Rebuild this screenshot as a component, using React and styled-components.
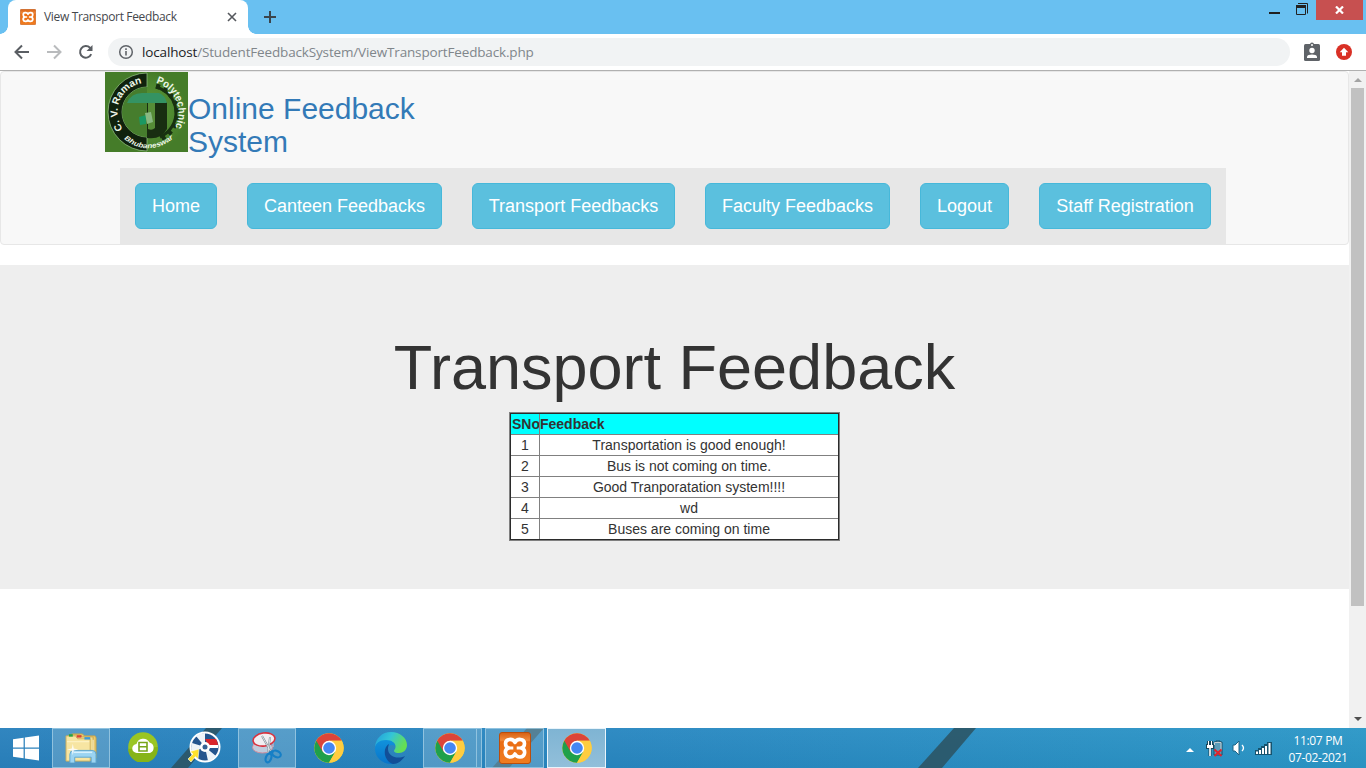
import React from "react";
import styled, { createGlobalStyle } from "styled-components";

const Global = createGlobalStyle`
  * { box-sizing: border-box; }
  html, body { margin: 0; padding: 0; overflow: hidden; background: #fff; }
  body { font-family: "Liberation Sans", Arial, sans-serif; font-size: 14px; color: #333; }
  svg { display: block; flex: none; }
`;

const uiFont = `"Open Sans", "Noto Sans", sans-serif`;

const Screen = styled.div`
  width: 1366px;
  height: 768px;
  display: flex;
  flex-direction: column;
  overflow: hidden;
`;

/* Browser frame */
const TitleBar = styled.header`
  height: 34px;
  flex: none;
  display: flex;
  background: #69c0f1;
`;
const Tab = styled.div`
  width: 256px;
  height: 34px;
  padding: 0 16px 0 20px;
  display: flex;
  align-items: center;
  background:
    radial-gradient(circle at 0 0, transparent 7.5px, #fff 8px) 0 100% / 8px 8px no-repeat,
    radial-gradient(circle at 100% 0, transparent 7.5px, #fff 8px) 100% 100% / 8px 8px no-repeat;
  isolation: isolate;
  position: relative;
  &::before {
    content: "";
    position: absolute;
    inset: 0 8px;
    border-radius: 8px 8px 0 0;
    background: #fff;
    z-index: -1;
  }
`;
const TabTitle = styled.span`
  flex: 1;
  margin-left: 8px;
  font: 12px/16px ${uiFont};
  letter-spacing: -0.34px;
  color: #45484d;
  white-space: nowrap;
`;
const NewTab = styled.div`
  padding: 11px 0 0 8px;
`;
const WindowControls = styled.div`
  margin-left: auto;
  display: flex;
  align-items: flex-start;
`;
const Control = styled.div`
  width: ${(p) => p.$w}px;
  height: ${(p) => p.$h || 20}px;
  display: flex;
  align-items: center;
  justify-content: center;
  background: ${(p) => p.$bg || "transparent"};
`;
const Toolbar = styled.div`
  height: 37px;
  flex: none;
  display: flex;
  align-items: center;
  padding: 0 14px;
  background: #fff;
  border-bottom: 1px solid #b0b0b0;
`;
const NavIcons = styled.div`
  display: flex;
  gap: 16px;
  width: 94px;
`;
const AddressBar = styled.div`
  width: 1182px;
  height: 28px;
  border-radius: 14px;
  background: #f1f3f4;
  display: flex;
  align-items: center;
  padding-left: 10px;
  gap: 8px;
`;
const Url = styled.span`
  font: 13.5px/20px ${uiFont};
  letter-spacing: -0.155px;
  color: #80868b;
  white-space: nowrap;
  b { font-weight: 400; color: #202124; }
`;
const Extensions = styled.div`
  display: flex;
  align-items: center;
  gap: 15px;
  margin-left: auto;
`;

/* Page */
const Viewport = styled.div`
  flex: 1;
  min-height: 0;
  display: flex;
`;
const Page = styled.main`
  flex: 1;
  min-width: 0;
  background: #fff;
`;
const Navbar = styled.nav`
  height: 174px;
  margin-bottom: 20px;
  border: 1px solid #e7e7e7;
  border-radius: 4px;
  background: #f8f8f8;
`;
const Brand = styled.div`
  height: 96px;
  display: flex;
  padding-left: 104px;
`;
const BrandTitle = styled.h2`
  width: 260px;
  margin: 20px 0 0;
  font-size: 30px;
  font-weight: 400;
  line-height: 33px;
  color: #337ab7;
`;
const Menu = styled.ul`
  list-style: none;
  width: 1106px;
  height: 76px;
  margin: 0 0 0 119px;
  padding: 15px;
  display: flex;
  justify-content: space-between;
  background: #e7e7e7;
`;
const MenuButton = styled.li`
  width: ${(p) => p.$w}px;
  height: 46px;
  border: 1px solid #46b8da;
  border-radius: 6px;
  background: #5bc0de;
  color: #fff;
  font-size: 18px;
  line-height: 44px;
  text-align: center;
  white-space: nowrap;
`;
const Jumbotron = styled.section`
  height: 324px;
  padding-top: 68px;
  background: #eee;
  display: flex;
  flex-direction: column;
  align-items: center;
`;
const Heading = styled.h1`
  margin: 0 0 10px;
  font-size: 63px;
  line-height: 69px;
  font-weight: 400;
  white-space: nowrap;
`;
const FeedbackTable = styled.div`
  width: 331px;
  border: 1px solid #808080;
  outline: 1px solid #2b2b2b;
  outline-offset: -2px;
  padding: 1px;
  background: #fff;
`;
const Row = styled.div`
  height: 21px;
  display: grid;
  grid-template-columns: 28px 1fr;
  line-height: 20px;
  text-align: ${(p) => (p.$head ? "left" : "center")};
  font-weight: ${(p) => (p.$head ? 700 : 400)};
  background: ${(p) => (p.$head ? "#0ff" : "#fff")};
  border-bottom: 1px solid #808080;
  &:last-child { height: 20px; border-bottom: 0; }
`;
const Cell = styled.span`
  height: 20px;
  white-space: nowrap;
  padding-left: ${(p) => (p.$lead ? 1 : 0)}px;
  & + & { border-left: 1px solid #808080; }
`;
const Scrollbar = styled.div`
  width: 17px;
  height: 657px;
  padding: 7px 2px 7px 2px;
  background: #f1f1f1;
  display: flex;
  flex-direction: column;
  align-items: center;
`;
const Thumb = styled.div`
  width: 13px;
  height: 518px;
  margin: 6px 0 auto;
  background: #c1c1c1;
`;

/* Taskbar */
const Taskbar = styled.footer`
  position: relative;
  height: 40px;
  flex: none;
  display: flex;
  background:
    linear-gradient(rgba(255, 255, 255, 0.04), rgba(0, 0, 0, 0.03)),
    linear-gradient(90deg, #2981bd, #2887c1 45%, #2b97c7);
`;
const Streak = styled.svg`
  position: absolute;
  inset: 0;
`;
const Slot = styled.div`
  position: relative;
  width: ${(p) => p.$w}px;
  margin-left: ${(p) => p.$ml || 0}px;
  height: 40px;
  padding-bottom: ${(p) => p.$lift || 0}px;
  display: flex;
  align-items: center;
  justify-content: center;
  background: ${(p) => (p.$state === "active" ? "linear-gradient(#7fb4d3, #92bfda)" : p.$state === "open" ? "rgba(150,192,216,.38)" : "transparent")};
  border: ${(p) => (p.$state === "active" ? "1px solid #e8f4fb" : p.$state === "open" ? "1px solid rgba(175,215,235,.65)" : "0")};
`;
const Stacked = styled.div`
  width: 5px;
  height: 40px;
  border: 1px solid rgba(175,215,235,.65);
  border-left: 0;
  background: rgba(150,192,216,.38);
`;
const Tray = styled.div`
  position: relative;
  margin-left: auto;
  display: flex;
  align-items: center;
  padding-right: 18px;
`;
const TrayIcons = styled.div`
  display: flex;
  align-items: center;
  gap: 9px;
  margin-right: 16px;
  svg:first-child { margin: 3px 3px 0 0; }
`;
const Clock = styled.div`
  width: 60px;
  padding-top: 1px;
  font: 12px/17px ${uiFont};
  letter-spacing: -0.35px;
  color: #fff;
  text-align: center;
  white-space: nowrap;
`;

const Xampp = ({ size }) => (
  <svg width={size} height={size} viewBox="0 0 32 32">
    <defs>
      <linearGradient id="xo" x2="0" y2="1"><stop offset="0" stopColor="#d65f12" /><stop offset=".25" stopColor="#f08a3c" /><stop offset=".3" stopColor="#ea6d14" /><stop offset="1" stopColor="#f07d20" /></linearGradient>
    </defs>
    <rect x=".5" y=".5" width="31" height="31" rx="2.5" fill="url(#xo)" stroke="#b94e0d" />
    <path d="M16 10.500C14 6 6.500 6.500 6.500 11.500 6.500 14 8 15.500 9.500 16 7 17 6 19 6.500 21.500 7.500 26 14 26 16 22 18 26 24.500 26 25.500 21.500 26 19 25 17 22.500 16 24 15.500 25.500 14 25.500 11.500 25.500 6.500 18 6 16 10.500Z" fill="none" stroke="#fff" strokeWidth="3.600" strokeLinejoin="round" />
    <path d="M9 16h5.300M17.700 16H23" stroke="#fff" strokeWidth="3.200" />
  </svg>
);

const Chrome = () => (
  <svg width="30" height="30" viewBox="0 0 48 48">
    <circle cx="24" cy="24" r="23.500" fill="#fc3" />
    <path d="M24 24 3.650 12.250A23.500 23.500 0 0 0 24 47.500L34.200 29.900Z" fill="#1fa04b" />
    <path d="M24 12.250H44.350A23.500 23.500 0 0 0 3.650 12.250L13.820 29.880Z" fill="#dc4438" />
    <path d="M24 12.250H44.350A23.500 23.500 0 0 1 24 47.500L34.180 29.880Z" fill="#ffcd40" />
    <circle cx="24" cy="24" r="11.500" fill="#fff" />
    <circle cx="24" cy="24" r="9.300" fill="#4587f3" />
  </svg>
);

const Edge = () => (
  <svg width="32" height="32" viewBox="0 0 32 32">
    <defs>
      <linearGradient id="ea" x2="1" y2=".4"><stop offset="0" stopColor="#1f9cdc" /><stop offset=".5" stopColor="#34c5d7" /><stop offset="1" stopColor="#65df54" /></linearGradient>
      <linearGradient id="eb" x2="0" y2="1"><stop offset="0" stopColor="#1192dc" /><stop offset="1" stopColor="#0874c9" /></linearGradient>
    </defs>
    <path d="M0 15C1 6 7 0 16 0c9 0 16 6 16 13 0 5-4 8-8 8-5 0-6-2-4-4 2-4-1-8-7-8C7 8 2 11 0 15Z" fill="url(#ea)" />
    <path d="M0 17C0 11 5 8 11 8c6 0 9 3 9 6-2-2-7-1-8 3-2 8 6 14 16 8-3 5-7 7-12 7C7 32 0 25 0 17Z" fill="url(#eb)" />
    <path d="M14 12c-7 4-5 17 4 20 6 0 10-5 12-8-8 4-17 0-17-7 0-2 .500-4 1-5Z" fill="#124f98" />
  </svg>
);

const Explorer = () => (
  <svg width="33" height="30" viewBox="0 0 34 31">
    <path d="M7 3V1h11l2 2h11l1 2v21H7Z" fill="#eacb70" stroke="#c9a54c" />
    <path d="M4 5V2h11l3 2h11v24H4Z" fill="#f3dd91" stroke="#c9a54c" />
    <path d="M1 7V3h10l2 3h13v23H1Z" fill="#f7e5a2" stroke="#d0b05c" />
    <path d="M4 2.500h4" stroke="#21a34a" strokeWidth="2.500" /><path d="M12 3.500h5" stroke="#db4235" strokeWidth="2.500" /><path d="M20 5.500h6" stroke="#3f99d6" strokeWidth="2.500" />
    <path d="M2 9h23M29 7v12" stroke="#fff5cb" />
    <path d="M5 31v-9q0-4 4-4h19q4 0 4 4v9h-5v-6H10v6Z" fill="#9bd4f2" stroke="#5fa6cd" />
    <path d="M9 20h19" stroke="#d8f1fd" strokeWidth="1.500" />
    <path d="M8 11l1 5 5 1-5 1-1 5-1-5-5-1 5-1Z" fill="#fff" opacity=".85" />
  </svg>
);

const CloudBadge = () => (
  <svg width="30" height="30" viewBox="0 0 30 30">
    <circle cx="15" cy="15" r="14.800" fill="#9ac524" /><path d="M0 17a15 15 0 0 0 30-2Z" fill="#86b418" />
    <path d="M9 21a4.500 4.500 0 0 1-.500-9 7 7 0 0 1 13-1.500A5.500 5.500 0 0 1 22 21Z" fill="#fff" />
    <path d="M11 10.500h8v8.500h-8ZM11 14.700h8" fill="none" stroke="#78a51a" strokeWidth="1.600" />
  </svg>
);

const Disc = () => (
  <svg width="33" height="34" viewBox="0 0 33 34">
    <circle cx="17" cy="16" r="15.500" fill="#fff" /><circle cx="17" cy="16" r="13.500" fill="#24558e" />
    <path d="M17 16 8 5a14 14 0 0 1 9-3ZM17 16 4 12a14 14 0 0 0 0 9ZM17 16l3 14a14 14 0 0 0 8-5Z" fill="#eef4f9" />
    <path d="M17 8h11a14 14 0 0 1 2 6H20Z" fill="#d8252b" /><path d="M20 14h10v3H19Z" fill="#fff" />
    <circle cx="17" cy="16" r="5" fill="#fff" /><circle cx="17" cy="16" r="2.500" fill="#356294" />
    <path d="m11 18-1 10-2.500-2.500L3 31l-3-3 5-5-3-2.500Z" fill="#ffe22c" stroke="#fff" strokeWidth=".6" />
  </svg>
);

const Snipping = () => (
  <svg width="32" height="32" viewBox="0 0 32 32">
    <ellipse cx="11.500" cy="15.500" rx="10" ry="5.500" fill="#bfcbdc" stroke="#cf8b9b" />
    <path d="M3 8v7M22 7v8" stroke="#e8bcc6" />
    <ellipse cx="13" cy="7.500" rx="11" ry="6.500" fill="#f1eef2" stroke="#d8323f" strokeWidth="1.600" transform="rotate(-8 13 7.500)" />
    <path d="m11 4 9 16M19 5l-2 16" stroke="#7b8790" strokeWidth="1.900" /><path d="m11 4 9 16M19 5l-2 16" stroke="#e3e9ed" strokeWidth=".9" />
    <ellipse cx="17.500" cy="26" rx="2.700" ry="4.500" fill="none" stroke="#167fc6" strokeWidth="2.200" transform="rotate(20 17.500 26)" />
    <ellipse cx="25.500" cy="22" rx="4.500" ry="3" fill="none" stroke="#167fc6" strokeWidth="2.200" transform="rotate(25 25.500 22)" />
    <path d="m18 21 4-2" stroke="#167fc6" strokeWidth="2.500" />
  </svg>
);

const CollegeLogo = () => (
  <svg width="83" height="80" viewBox="0 0 83 80">
    <defs>
      <radialGradient id="lg"><stop offset="0" stopColor="#60a03c" /><stop offset="1" stopColor="#457c29" /></radialGradient>
      <path id="arcL" d="M18 57A29 29 0 0 1 40 11" />
      <path id="arcR" d="M51 11A31 31 0 0 1 69 57" />
      <path id="arcB" d="M19 67Q43 86 69 66" />
    </defs>
    <rect width="83" height="80" fill="url(#lg)" />
    <path d="M42 1A39 39 0 0 0 42 79V65A25 25 0 0 1 42 15Z" fill="#10220d" stroke="#9ac58a" strokeWidth=".7" />
    <path d="M42 15A25 25 0 0 0 42 65Z" fill="#467d2d" />
    <path d="M42 30H62V57Q56 68 42 66Z" fill="#182e11" />
    <path d="M22 31Q26 21 37 21H54Q60 23 62 31Z" fill="#349363" />
    <path d="M43 31H50V56Q47 59 43 57Z" fill="#568d37" />
    <path d="m34 45 7-2v9l-6 1Z" fill="#1b9862" /><path d="M40 41l6-1 2 10-6 2Z" fill="#89b982" />
    <path d="M51 15A26.500 26.500 0 0 1 55 65" fill="none" stroke="#183010" strokeWidth="3" />
    <path d="M51 14A28 28 0 0 1 55 67" fill="none" stroke="#183010" strokeWidth="5" strokeDasharray="4 4" />
    <g fill="#eef7e8" fontFamily="Liberation Sans, sans-serif" fontWeight="700">
      <text fontSize="10"><textPath href="#arcL" textLength="59" lengthAdjust="spacingAndGlyphs">C. V. Raman</textPath></text>
      <text fontSize="10.500"><textPath href="#arcR" textLength="55" lengthAdjust="spacingAndGlyphs">Polytechnic</textPath></text>
      <text fontSize="7" fontStyle="italic"><textPath href="#arcB" textLength="54" lengthAdjust="spacingAndGlyphs">Bhubaneswar</textPath></text>
    </g>
  </svg>
);

const menu = [["Home", 82], ["Canteen Feedbacks", 195], ["Transport Feedbacks", 203], ["Faculty Feedbacks", 185], ["Logout", 89], ["Staff Registration", 172]];
const feedback = ["Transportation is good enough!", "Bus is not coming on time.", "Good Tranporatation system!!!!", "wd", "Buses are coming on time"];

export default function App() {
  return (
    <Screen>
      <Global />
      <TitleBar>
        <Tab>
          <Xampp size={16} />
          <TabTitle>View Transport Feedback</TabTitle>
          <svg width="16" height="16"><path d="m4 4 8 8m0-8-8 8" stroke="#55585d" strokeWidth="1.600" /></svg>
        </Tab>
        <NewTab><svg width="12" height="12"><path d="M6 0v12M0 6h12" stroke="#3b454c" strokeWidth="2" /></svg></NewTab>
        <WindowControls>
          <Control $w={27}><svg width="11" height="20"><path d="M0 13h11" stroke="#202020" strokeWidth="2" /></svg></Control>
          <Control $w={28} $h={18}><svg width="12" height="12" viewBox="0 0 12 12"><path d="M2 .5h9.500v10" fill="none" stroke="#222" /><path d="M.5 2.500h9v9h-9Z" fill="none" stroke="#222" /><path d="M0 3.500h10" stroke="#222" strokeWidth="3" /></svg></Control>
          <Control $w={47} $bg="#c75050"><svg width="9" height="8"><path d="m1 .5 7 7m0-7-7 7" stroke="#fff" strokeWidth="2.200" /></svg></Control>
          <Control $w={3} />
        </WindowControls>
      </TitleBar>

      <Toolbar>
        <NavIcons>
          <svg width="16" height="16" viewBox="0 0 16 16" fill="none" stroke="#5a5e63" strokeWidth="2"><path d="M15 8H2M8 1.500 1.500 8 8 14.500" /></svg>
          <svg width="16" height="16" viewBox="0 0 16 16" fill="none" stroke="#b9bbbd" strokeWidth="2"><path d="M1 8h13M8 1.500 14.500 8 8 14.500" /></svg>
          <svg width="16" height="16" viewBox="0 0 16 16"><path d="M13.200 10.200A5.800 5.800 0 1 1 12 3.800L13.500 5.500" fill="none" stroke="#5a5e63" strokeWidth="2" /><path d="M14.500 1v6h-6Z" fill="#5a5e63" /></svg>
        </NavIcons>
        <AddressBar>
          <svg width="16" height="16" viewBox="0 0 16 16"><circle cx="8" cy="8" r="6.300" fill="none" stroke="#5f6368" strokeWidth="1.500" /><path d="M8 7v4.500M8 4.300v1.600" stroke="#5f6368" strokeWidth="1.600" /></svg>
          <Url><b>localhost</b>/StudentFeedbackSystem/ViewTransportFeedback.php</Url>
        </AddressBar>
        <Extensions>
          <svg width="18" height="20" viewBox="0 0 18 20"><rect x="1" y="2" width="16" height="17" rx="1.500" fill="#5f6368" /><circle cx="9" cy="2.500" r="2" fill="#5f6368" /><circle cx="9" cy="3" r="1" fill="#fff" /><circle cx="9" cy="8.500" r="2.700" fill="#fff" /><path d="M4 16v-1.200c0-3 10-3 10 0V16Z" fill="#fff" /></svg>
          <svg width="16" height="16" viewBox="0 0 16 16"><circle cx="8" cy="8" r="8" fill="#d93025" /><path d="m8 3.700 4.300 4.500H10v3.500H6V8.200H3.700Z" fill="#fff" /></svg>
        </Extensions>
      </Toolbar>

      <Viewport>
        <Page>
          <Navbar>
            <Brand>
              <CollegeLogo />
              <BrandTitle>Online Feedback System</BrandTitle>
            </Brand>
            <Menu>{menu.map(([label, w]) => <MenuButton key={label} $w={w}>{label}</MenuButton>)}</Menu>
          </Navbar>
          <Jumbotron>
            <Heading>Transport Feedback</Heading>
            <FeedbackTable>
              <Row $head><Cell $lead>SNo</Cell><Cell>Feedback</Cell></Row>
              {feedback.map((text, i) => <Row key={text}><Cell>{i + 1}</Cell><Cell>{text}</Cell></Row>)}
            </FeedbackTable>
          </Jumbotron>
        </Page>
        <Scrollbar>
          <svg width="8" height="4"><path d="M0 4 4 0l4 4Z" fill="#a3a3a3" /></svg>
          <Thumb />
          <svg width="8" height="4"><path d="M0 0h8L4 4Z" fill="#505050" /></svg>
        </Scrollbar>
      </Viewport>

      <Taskbar>
        <Streak width="1366" height="40">
          <g fill="#2b5260" opacity=".85">
            <path d="M206 0h16l-34 40h-17Z" /><path d="M527 0h17l-35 40h-17Z" /><path d="M954 0h22l-34 40h-24Z" />
          </g>
        </Streak>
        <Slot $w={27} $ml={12}><svg width="26" height="26" viewBox="0 0 27 26"><path d="m0 4 11-1.600V12.500H0ZM12.300 2.200 27 0v12.500H12.300ZM0 13.700h11v10L0 22ZM12.300 13.700H27V26l-14.700-2.100Z" fill="#fff" /></svg></Slot>
        <Slot $w={58} $ml={13} $state="open"><Explorer /></Slot>
        <Slot $w={30} $ml={18} $lift={2}><CloudBadge /></Slot>
        <Slot $w={33} $ml={30}><Disc /></Slot>
        <Slot $w={58} $ml={17} $state="open"><Snipping /></Slot>
        <Slot $w={30} $ml={18}><Chrome /></Slot>
        <Slot $w={32} $ml={31}><Edge /></Slot>
        <Slot $w={54} $ml={16} $state="open"><Chrome /></Slot>
        <Stacked />
        <Slot $w={59} $ml={3} $state="open"><Xampp size={32} /></Slot>
        <Slot $w={59} $ml={3} $state="active"><Chrome /></Slot>
        <Tray>
          <TrayIcons>
            <svg width="8" height="5"><path d="m0 5 4-4 4 4Z" fill="#fff" /></svg>
            <svg width="17" height="17" viewBox="0 0 17 17">
              <path d="M8 3V2h2V1h4v1h2v13H8Z" fill="#5c9cb8" stroke="#1b4f66" strokeWidth="1" />
              <path d="M8.500 5V2.500h6.500V11" fill="none" stroke="#c3ced3" />
              <path d="M2.500 1v4M5.500 1v4M4 9v7" stroke="#16475b" strokeWidth="3" />
              <path d="M0 4h8v5H0Z" fill="#16475b" />
              <path d="M1 5h6v3H1ZM2 1h1v4H2ZM5 1h1v4H5ZM3.200 8h1.600v8H3.200Z" fill="#fff" />
              <path d="m8.500 9.500 7 6.500m0-6.500-7 6.500" stroke="#e0242c" strokeWidth="2" />
            </svg>
            <svg width="14" height="16" viewBox="0 0 14 16"><path d="M1 5h2l4-4v14l-4-4H1Z" fill="#fff" stroke="#1d6485" /><path d="M10 5q3 3 0 6" fill="none" stroke="#fff" strokeWidth="1.300" /></svg>
            <svg width="17" height="13" viewBox="0 0 17 13"><path d="M0 8h3V6h3V4h3V2h3V0h5v13H0Z" fill="#16536e" /><path d="M2 9.500V12M5 8v4M8 6v6M11 4v8M14.500 1v11" stroke="#fff" strokeWidth="2" /></svg>
          </TrayIcons>
          <Clock><div>11:07 PM</div><div>07-02-2021</div></Clock>
        </Tray>
      </Taskbar>
    </Screen>
  );
}
